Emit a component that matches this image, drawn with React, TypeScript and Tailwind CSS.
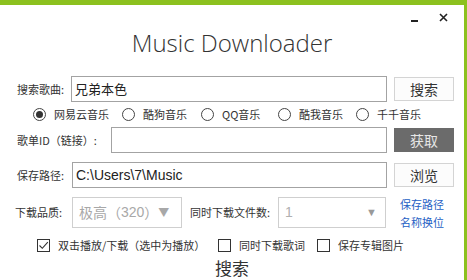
import React from "react";

const cjk = { fontFamily: '"Noto Sans CJK SC", "Noto Sans", sans-serif' };

function Radio({ label, checked, w }: { label: string; checked?: boolean; w?: string }) {
  return (
    <div className={`flex items-center ${w ?? ""}`}>
      <span className="flex h-[13px] w-[13px] items-center justify-center rounded-full border border-[#444]">
        {checked && <span className="h-[7px] w-[7px] rounded-full bg-[#333]" />}
      </span>
      <span className="ml-[8px] text-[11px] leading-none text-[#333]">{label}</span>
    </div>
  );
}

function Check({ label, checked, className }: { label: string; checked?: boolean; className?: string }) {
  return (
    <div className={`flex items-center ${className ?? ""}`}>
      <span className="flex h-[13px] w-[13px] items-center justify-center border border-[#333] bg-white">
        {checked && (
          <svg width="11" height="11" viewBox="0 0 11 11">
            <path d="M1.5 5.5 L4.3 8.3 L9.8 2.2" fill="none" stroke="#333" strokeWidth="1.1" />
          </svg>
        )}
      </span>
      <span className="ml-[8px] text-[11px] leading-none text-[#333]">{label}</span>
    </div>
  );
}

function Button({ text, dark }: { text: string; dark?: boolean }) {
  return (
    <button
      className={
        dark
          ? "flex h-[24px] w-[60px] items-center justify-center bg-[#6b6b6b] text-[14px] text-[#e6e6e6]"
          : "flex h-[24px] w-[60px] items-center justify-center border border-[#d4d4d4] bg-[#fcfcfc] text-[14px] text-[#333]"
      }
    >
      {text}
    </button>
  );
}

export default function App() {
  return (
    <div
      className="relative h-[280px] w-[467px] overflow-hidden border-t-[5px] border-r-[3px] border-[#8cc11f] bg-white"
      style={cjk}
    >
      {/* window controls */}
      <div className="absolute right-[16px] top-[7px] flex items-center">
        <span className="mt-[8px] block h-[2px] w-[7px] bg-[#222]" />
        <svg className="ml-[21px]" width="9" height="9" viewBox="0 0 9 9">
          <path d="M1 1 L8 8 M8 1 L1 8" stroke="#222" strokeWidth="1.6" />
        </svg>
      </div>

      <div
        className="mt-[22px] text-center text-[24px] font-light leading-[32px] text-[#333]"
        style={{ fontFamily: '"Open Sans", sans-serif' }}
      >
        Music Downloader
      </div>

      <div className="mt-[17px] flex flex-col pl-[17px]">
        {/* search row */}
        <div className="flex h-[26px] items-center">
          <span className="w-[54px] text-[11px] text-[#333]">搜索歌曲:</span>
          <div className="flex h-[26px] w-[316px] items-center border border-[#a3a3a3] px-[3px] text-[13px] text-[#222]">
            兄弟本色
          </div>
          <div className="ml-[7px]">
            <Button text="搜索" />
          </div>
        </div>

        {/* source radios */}
        <div className="mt-[6px] flex h-[13px] items-center pl-[16px]">
          <Radio label="网易云音乐" checked w="w-[89px]" />
          <Radio label="酷狗音乐" w="w-[79px]" />
          <Radio label="QQ音乐" w="w-[77px]" />
          <Radio label="酷我音乐" w="w-[78px]" />
          <Radio label="千千音乐" />
        </div>

        {/* playlist row */}
        <div className="mt-[6px] flex h-[26px] items-center">
          <span className="w-[94px] text-[11px] text-[#333]">歌单ID（链接）:</span>
          <div className="h-[26px] w-[276px] border border-[#a3a3a3]" />
          <div className="ml-[7px]">
            <Button text="获取" dark />
          </div>
        </div>

        {/* path row */}
        <div className="mt-[9px] flex h-[26px] items-center">
          <span className="w-[55px] text-[11px] text-[#333]">保存路径:</span>
          <div
            className="flex h-[26px] w-[315px] items-center border border-[#a3a3a3] px-[3px] text-[14px] text-[#222]"
            style={{ fontFamily: '"Liberation Sans", sans-serif' }}
          >
            C:\Users\7\Music
          </div>
          <div className="ml-[7px]">
            <Button text="浏览" />
          </div>
        </div>

        {/* quality row */}
        <div className="-ml-[2px] mt-[9px] flex h-[31px] items-center">
          <span className="w-[57px] text-[11px] text-[#333]">下载品质:</span>
          <div className="flex h-[31px] w-[110px] items-center border border-[#cfcfcf] pl-[6px] text-[14px] text-[#a8a8a8]">
            <span>极高（</span>
            <span style={{ fontFamily: '"Liberation Sans", sans-serif' }}>320</span>
            <span>）</span>
            <span className="text-[11px]">▼</span>
          </div>
          <span className="ml-[8px] w-[88px] text-[11px] text-[#333]">同时下载文件数:</span>
          <div
            className="flex h-[31px] w-[108px] items-center justify-between border border-[#cfcfcf] pl-[6px] pr-[8px] text-[14px] text-[#b0b0b0]"
            style={{ fontFamily: '"Liberation Sans", sans-serif' }}
          >
            <span>1</span>
            <span className="text-[11px] text-[#999]">▼</span>
          </div>
          <div className="ml-[14px] flex flex-col text-[11px] leading-[18px] text-[#2560c4]">
            <span>保存路径</span>
            <span>名称换位</span>
          </div>
        </div>

        {/* options */}
        <div className="mt-[10px] flex h-[14px] items-center pl-[20px]">
          <Check label="双击播放/下载（选中为播放）" checked className="w-[181px]" />
          <Check label="同时下载歌词" className="w-[99px]" />
          <Check label="保存专辑图片" />
        </div>
      </div>

      <div className="mt-[5px] text-center text-[17px] leading-[22px] text-[#333]">搜索</div>
    </div>
  );
}
